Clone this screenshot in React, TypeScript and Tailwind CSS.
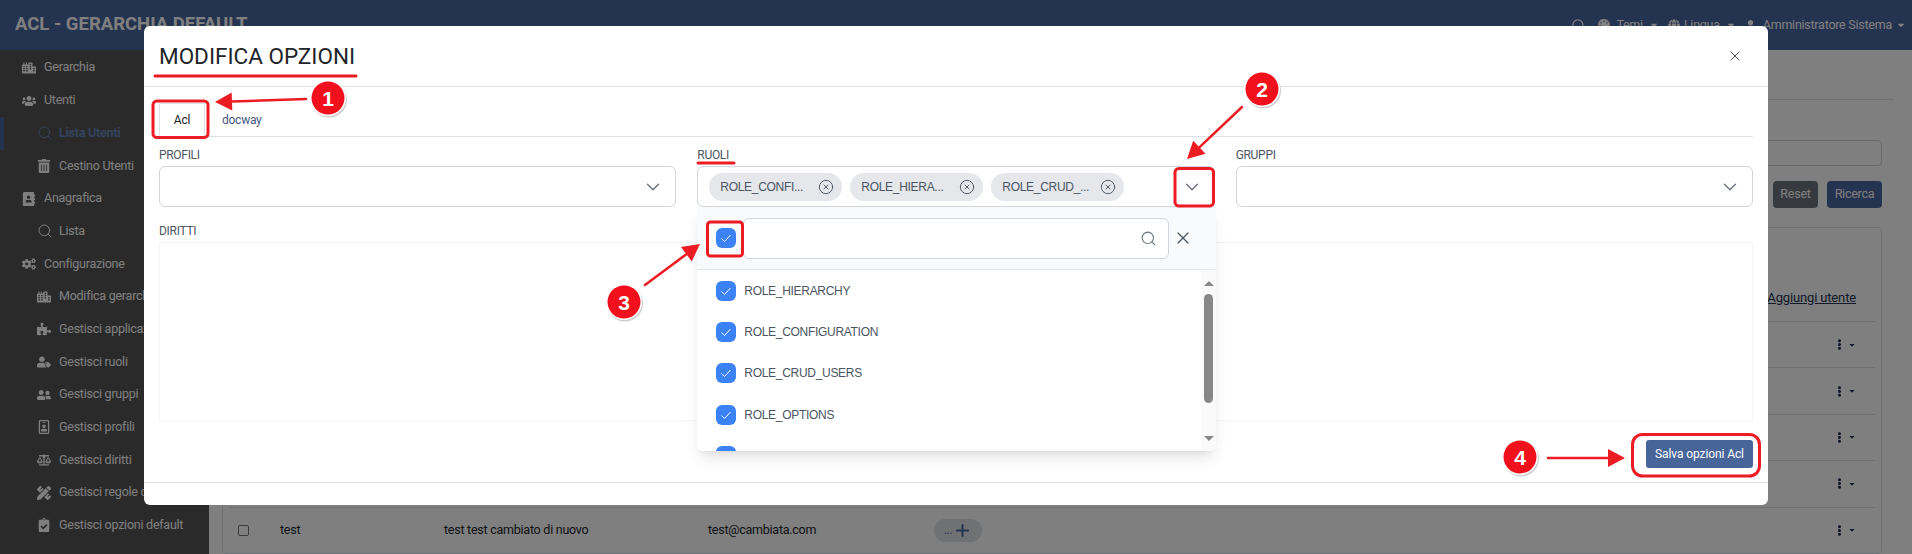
import type { ReactNode } from "react";
import { ChevronDown, CircleX, Plus, Search, X } from "lucide-react";
import {
  FaAddressBook,
  FaBalanceScale,
  FaCaretDown,
  FaCity,
  FaClipboardCheck,
  FaCogs,
  FaEllipsisV,
  FaGlobe,
  FaPalette,
  FaPencilRuler,
  FaPuzzlePiece,
  FaRegIdBadge,
  FaTrashAlt,
  FaUser,
  FaUserFriends,
  FaUsers,
  FaUserTag,
} from "react-icons/fa";

const menu = [
  { label: "Gerarchia", icon: <FaCity />, sub: false },
  { label: "Utenti", icon: <FaUsers />, sub: false },
  { label: "Lista Utenti", icon: <Search size={16} strokeWidth={1.5} />, sub: true, active: true },
  { label: "Cestino Utenti", icon: <FaTrashAlt />, sub: true },
  { label: "Anagrafica", icon: <FaAddressBook />, sub: false },
  { label: "Lista", icon: <Search size={16} strokeWidth={1.5} />, sub: true },
  { label: "Configurazione", icon: <FaCogs />, sub: false },
  { label: "Modifica gerarchia", icon: <FaCity />, sub: true },
  { label: "Gestisci applicazioni", icon: <FaPuzzlePiece />, sub: true },
  { label: "Gestisci ruoli", icon: <FaUserTag />, sub: true },
  { label: "Gestisci gruppi", icon: <FaUserFriends />, sub: true },
  { label: "Gestisci profili", icon: <FaRegIdBadge />, sub: true },
  { label: "Gestisci diritti", icon: <FaBalanceScale />, sub: true },
  { label: "Gestisci regole di accesso", icon: <FaPencilRuler />, sub: true },
  { label: "Gestisci opzioni default", icon: <FaClipboardCheck />, sub: true },
];

const tableRows = [
  { name: "", full: "", email: "" },
  { name: "", full: "", email: "" },
  { name: "", full: "", email: "" },
  { name: "", full: "", email: "" },
  { name: "test", full: "test test cambiato di nuovo", email: "test@cambiata.com" },
];

const roles = ["ROLE_HIERARCHY", "ROLE_CONFIGURATION", "ROLE_CRUD_USERS", "ROLE_OPTIONS", ""];
const chips = ["ROLE_CONFI...", "ROLE_HIERA...", "ROLE_CRUD_..."];

function Checkbox() {
  return (
    <span className="flex h-5 w-5 shrink-0 items-center justify-center rounded-md bg-[#3b82f6]">
      <svg width="12" height="12" viewBox="0 0 12 12" fill="none" stroke="white" strokeWidth="1">
        <path d="M1.5 6.5 L4.5 9.5 L10.5 3" />
      </svg>
    </span>
  );
}

function Label({ children }: { children: ReactNode }) {
  return <div className="h-[20px] text-[12px] leading-[18px] tracking-[-0.3px] text-[#4b5563]">{children}</div>;
}

function SelectBox({ children }: { children?: ReactNode }) {
  return (
    <div className="flex h-[41px] items-center rounded-md border border-[#d1d5db] bg-white pr-[11px]">
      <div className="flex flex-1 items-center gap-[8px] pl-[11px]">{children}</div>
      <ChevronDown size={22} strokeWidth={1.5} className="text-[#6b7280]" />
    </div>
  );
}

function RolesDropdown() {
  return (
    <div className="absolute left-0 top-full z-10 flex h-[244px] w-[519px] flex-col overflow-hidden rounded-b-md bg-white shadow-lg">
      <div className="flex h-[63px] shrink-0 items-center border-b border-[#e5e7eb] bg-[#f9fafb] pl-[19px]">
        <Checkbox />
        <div className="ml-[7px] flex h-[41px] w-[426px] items-center justify-end rounded-md border border-[#d1d5db] bg-white pr-[11px]">
          <Search size={17} strokeWidth={1.5} className="text-[#6b7280]" />
        </div>
        <X size={20} strokeWidth={1.4} className="ml-[4px] text-[#4b5563]" />
      </div>
      <div className="flex min-h-0 flex-1">
        <div className="flex-1 overflow-hidden pl-[19px]">
          {roles.map((role, i) => (
            <div key={i} className="flex h-[41.3px] shrink-0 items-center gap-[8px] text-[12px] tracking-[-0.3px] text-[#4b5563]">
              <Checkbox />
              <span className="font-['Liberation_Sans',sans-serif]">{role}</span>
            </div>
          ))}
        </div>
        <div className="flex w-[15px] flex-col items-center bg-[#fafafa] pt-[11px]">
          <span className="h-0 w-0 border-x-[5px] border-b-[5px] border-x-transparent border-b-[#888888]" />
          <span className="mt-[8px] h-[109px] w-[9px] rounded-full bg-[#888888]" />
          <span className="mt-[33px] h-0 w-0 border-x-[5px] border-t-[5px] border-x-transparent border-t-[#888888]" />
        </div>
      </div>
    </div>
  );
}

function Modal() {
  return (
    <div className="absolute left-[144px] top-[26px] z-20 flex h-[479px] w-[1624px] flex-col rounded-md bg-white text-[#212529]">
      <div className="flex h-[61px] shrink-0 items-center justify-between border-b border-[#dee2e6] pl-[15px] pr-[25px]">
        <h2 className="text-[22.5px] font-normal uppercase leading-none tracking-normal text-[#212529]">Modifica opzioni</h2>
        <X size={16} strokeWidth={1.3} className="text-[#333333]" />
      </div>
      <div className="flex min-h-0 flex-1 flex-col px-[15px]">
        <div className="mt-[17px] flex h-[33px] shrink-0 items-end border-b border-[#dee2e6] text-[12px]">
          <span className="flex h-[33px] w-[46px] items-center justify-center border-x border-t border-[#dee2e6] bg-white text-[#212529]">Acl</span>
          <span className="flex h-[33px] items-center pl-[17px] text-[#47587f]">docway</span>
        </div>
        <div className="mt-[9px] grid shrink-0 grid-cols-3 gap-x-[21px]">
          <div>
            <Label>PROFILI</Label>
            <SelectBox />
          </div>
          <div className="relative">
            <Label>RUOLI</Label>
            <SelectBox>
              {chips.map((chip) => (
                <span
                  key={chip}
                  className="flex h-[28px] w-[133px] items-center justify-between rounded-full bg-[#e5e7eb] pl-[11px] pr-[8px] font-['Liberation_Sans',sans-serif] text-[12px] tracking-[-0.3px] text-[#4b5563]"
                >
                  {chip}
                  <CircleX size={16} strokeWidth={1.4} />
                </span>
              ))}
            </SelectBox>
            <RolesDropdown />
          </div>
          <div>
            <Label>GRUPPI</Label>
            <SelectBox />
          </div>
        </div>
        <div className="mt-[15px] h-[20px] shrink-0 text-[12px] leading-[18px] tracking-[-0.3px] text-[#4b5563]">DIRITTI</div>
        <div className="h-[179px] shrink-0 border border-[#f3f4f6]" />
        <div className="mt-[19px] flex shrink-0 justify-end">
          <button className="h-[28px] w-[107px] rounded-[3px] bg-[#48659a] text-[12px] tracking-[-0.1px] text-white">Salva opzioni Acl</button>
        </div>
      </div>
      <div className="h-[23px] shrink-0 border-t border-[#dee2e6]" />
    </div>
  );
}

function Arrow({ x1, y1, x2, y2, head = 17 }: { x1: number; y1: number; x2: number; y2: number; head?: number }) {
  const len = Math.hypot(x2 - x1, y2 - y1);
  const ux = (x2 - x1) / len;
  const uy = (y2 - y1) / len;
  const bx = x2 - ux * head;
  const by = y2 - uy * head;
  const w = 9;
  return (
    <g>
      <line x1={x1} y1={y1} x2={bx} y2={by} stroke="#ed1c24" strokeWidth="2.5" strokeLinecap="round" />
      <polygon points={`${x2},${y2} ${bx - uy * w},${by + ux * w} ${bx + uy * w},${by - ux * w}`} fill="#ed1c24" />
    </g>
  );
}

function Badge({ cx, cy, n }: { cx: number; cy: number; n: number }) {
  return (
    <g>
      <circle cx={cx + 1} cy={cy + 1.5} r={18} fill="#cfcfcf" />
      <circle cx={cx} cy={cy} r={18} fill="white" />
      <circle cx={cx} cy={cy} r={16.5} fill="#f2101c" />
      <text x={cx} y={cy + 7.5} textAnchor="middle" fontSize="21" fontWeight="700" fill="white" fontFamily="Liberation Sans, sans-serif">
        {n}
      </text>
    </g>
  );
}

function Annotations() {
  const red = "#ed1c24";
  return (
    <svg className="pointer-events-none absolute inset-0 z-30" width="1912" height="554" fill="none">
      <line x1="155" y1="76" x2="356" y2="76" stroke={red} strokeWidth="3" strokeLinecap="round" />
      <line x1="698" y1="163" x2="734" y2="163" stroke={red} strokeWidth="3" strokeLinecap="round" />
      <rect x="153" y="101" width="55" height="36.5" rx="4" stroke={red} strokeWidth="3" />
      <rect x="1175" y="168.5" width="38.5" height="37.5" rx="4" stroke={red} strokeWidth="3" />
      <rect x="707.5" y="222" width="35" height="34" rx="3" stroke={red} strokeWidth="3" />
      <rect x="1632.5" y="434.5" width="127" height="41.5" rx="10" stroke={red} strokeWidth="3" />
      <Arrow x1={306} y1={99} x2={215} y2={102} />
      <Arrow x1={1242} y1={107} x2={1187} y2={159} />
      <Arrow x1={645} y1={285} x2={700} y2={244} />
      <Arrow x1={1548} y1={458} x2={1625} y2={458} />
      <Badge cx={328} cy={98} n={1} />
      <Badge cx={1262} cy={89} n={2} />
      <Badge cx={624} cy={302} n={3} />
      <Badge cx={1520} cy={457} n={4} />
    </svg>
  );
}

export default function App() {
  return (
    <div className="relative flex h-[554px] w-[1912px] flex-col overflow-hidden bg-white font-['Roboto',sans-serif] text-[12.5px] tracking-[-0.25px] text-[#212529]">
      <header className="flex h-[50px] shrink-0 items-center justify-between bg-[#48669f] pl-[15px] pr-[6px] text-white">
        <span className="text-[18.5px] font-bold tracking-normal">ACL - GERARCHIA DEFAULT</span>
        <div className="flex items-center">
          <Search size={15} strokeWidth={2} />
          <FaPalette className="ml-[12px]" size={12} />
          <span className="ml-[6px]">Temi</span>
          <FaCaretDown className="ml-[6px]" size={10} />
          <FaGlobe className="ml-[9px]" size={12} />
          <span className="ml-[4px]">Lingua</span>
          <FaCaretDown className="ml-[6px]" size={10} />
          <FaUser className="ml-[9px]" size={11} />
          <span className="ml-[7px]">Amministratore Sistema</span>
          <FaCaretDown className="ml-[4px]" size={10} />
        </div>
      </header>
      <div className="flex min-h-0 flex-1">
        <aside className="w-[209px] shrink-0 bg-[#545454] pt-[1.5px] text-white">
          {menu.map((item) => (
            <div
              key={item.label}
              className={`flex h-[32.7px] items-center whitespace-nowrap ${item.sub ? "pl-[37px]" : "pl-[22px]"} ${
                item.active ? "border-l-4 border-[#48669f] !pl-[33px] font-bold text-[#6a84b8]" : ""
              }`}
            >
              <span className="flex w-[22px] shrink-0 items-center text-[14px]">{item.icon}</span>
              {item.label}
            </div>
          ))}
        </aside>
        <main className="flex min-w-0 flex-1 flex-col pl-[13px] pr-[30px]">
          <div className="mr-[-12px] h-[50px] shrink-0 border-b border-[#dee2e6]" />
          <div className="mt-[40px] h-[26px] shrink-0 rounded border border-[#ced4da]" />
          <div className="mt-[15px] flex shrink-0 justify-end gap-[9px] text-white">
            <button className="h-[27px] w-[45px] rounded bg-[#6c757d]">Reset</button>
            <button className="h-[27px] w-[55px] rounded bg-[#48669f]">Ricerca</button>
          </div>
          <div className="mt-[19px] flex min-h-0 flex-1 flex-col rounded border border-[#dee2e6] pl-[6px] pr-[6px]">
            <div className="flex h-[94px] shrink-0 items-end justify-end border-b border-[#dee2e6] pb-[14px] pr-[19px]">
              <a className="text-[13px] tracking-[-0.15px] text-[#243350] underline">Aggiungi utente</a>
            </div>
            {tableRows.map((row, i) => (
              <div
                key={i}
                className="grid h-[46.4px] shrink-0 grid-cols-[51px_164px_264px_226px_1fr_auto] items-center border-b border-[#dee2e6] pr-[19px]"
              >
                <span className="ml-[9px] h-[11px] w-[11px] rounded-[2px] border border-[#6c757d]" />
                <span>{row.name}</span>
                <span>{row.full}</span>
                <span>{row.email}</span>
                <span className="flex h-[23px] w-[48px] items-center justify-center gap-[1px] rounded-full bg-[#dee2e6] text-[#48669f]">
                  <span className="text-[12px]">...</span>
                  <Plus size={19} strokeWidth={2.4} />
                </span>
                <span className="flex items-center gap-[3px] text-[#243350]">
                  <FaEllipsisV size={11} />
                  <FaCaretDown size={8} />
                </span>
              </div>
            ))}
          </div>
        </main>
      </div>
      <div className="absolute inset-0 z-[5] bg-black/50" />
      <Modal />
      <Annotations />
    </div>
  );
}
